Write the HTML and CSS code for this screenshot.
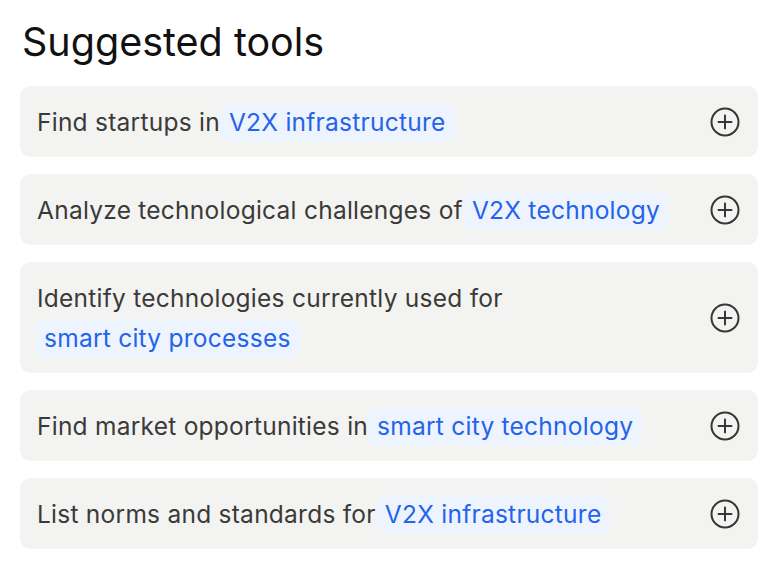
FILE: index.html
```html
<!DOCTYPE html>
<html>
<head>
  <title>Suggested tools</title>
  <link rel="stylesheet" href="styles.css">
</head>
<body>
  <div class="panel">
    <h1>Suggested tools</h1>

    <div class="tool">
      <div class="tool-text">Find startups in<span class="chip">V2X infrastructure</span></div>
      <svg class="add" viewBox="0 0 32 32"><circle cx="16" cy="16" r="13.5"/><path d="M16 9.5v13M9.5 16h13"/></svg>
    </div>

    <div class="tool">
      <div class="tool-text">Analyze technological challenges of<span class="chip">V2X technology</span></div>
      <svg class="add" viewBox="0 0 32 32"><circle cx="16" cy="16" r="13.5"/><path d="M16 9.5v13M9.5 16h13"/></svg>
    </div>

    <div class="tool">
      <div class="tool-text">Identify technologies currently used for <span class="chip chip-wrap">smart city processes</span></div>
      <svg class="add" viewBox="0 0 32 32"><circle cx="16" cy="16" r="13.5"/><path d="M16 9.5v13M9.5 16h13"/></svg>
    </div>

    <div class="tool">
      <div class="tool-text">Find market opportunities in<span class="chip">smart city technology</span></div>
      <svg class="add" viewBox="0 0 32 32"><circle cx="16" cy="16" r="13.5"/><path d="M16 9.5v13M9.5 16h13"/></svg>
    </div>

    <div class="tool">
      <div class="tool-text">List norms and standards for<span class="chip">V2X infrastructure</span></div>
      <svg class="add" viewBox="0 0 32 32"><circle cx="16" cy="16" r="13.5"/><path d="M16 9.5v13M9.5 16h13"/></svg>
    </div>
  </div>
</body>
</html>
```

FILE: styles.css
```css
body {
  font-family: Inter, "Noto Sans", sans-serif;
  margin: 0;
  padding: 0;
  background: #fff;
}
.panel {
  padding: 18px 24px 20px 20px;
}
h1 {
  font-size: 39.5px;
  font-weight: 400;
  color: #111;
  margin: 0 0 20px 2px;
  line-height: 48px;
}
.tool {
  display: flex;
  align-items: center;
  justify-content: space-between;
  background: #f3f3f2;
  border-radius: 11px;
  padding: 16px 17px 15px;
  margin-bottom: 17px;
}
.tool-text {
  font-size: 24.5px;
  letter-spacing: 0.25px;
  color: #3b3a38;
  line-height: 40px;
  max-width: 640px;
}
.chip {
  display: inline-block;
  color: #2563eb;
  background: #edf4fe;
  border-radius: 11px;
  padding: 0 9px;
  line-height: 39px;
  margin-left: 0;
}
.chip-wrap {
  margin-left: -2px;
}
.add {
  width: 32px;
  height: 32px;
  flex-shrink: 0;
  fill: none;
  stroke: #363636;
  stroke-width: 2;
  stroke-linecap: round;
}
```
